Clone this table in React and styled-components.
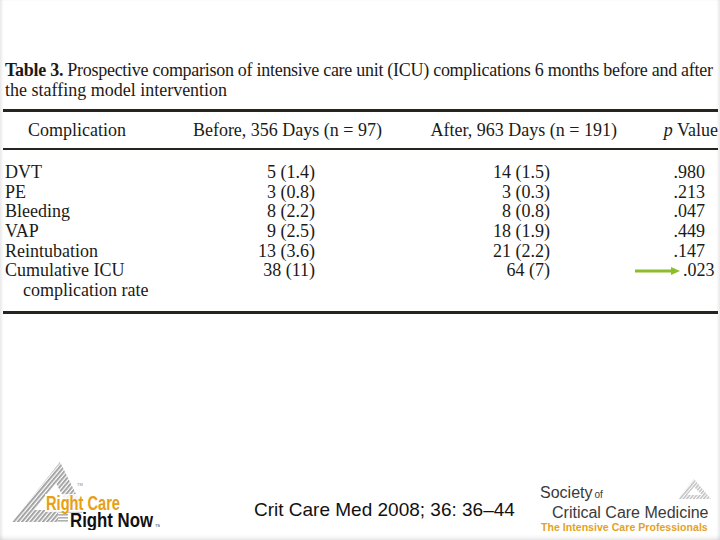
import styled, { createGlobalStyle } from "styled-components";

const GlobalStyle = createGlobalStyle`
  html, body {
    margin: 0;
    padding: 0;
    background: #ffffff;
  }
`;

const rows = [
  { label: "DVT", before: "5 (1.4)", after: "14 (1.5)", p: ".980" },
  { label: "PE", before: "3 (0.8)", after: "3 (0.3)", p: ".213" },
  { label: "Bleeding", before: "8 (2.2)", after: "8 (0.8)", p: ".047" },
  { label: "VAP", before: "9 (2.5)", after: "18 (1.9)", p: ".449" },
  { label: "Reintubation", before: "13 (3.6)", after: "21 (2.2)", p: ".147" },
  { label: "Cumulative ICU", before: "38 (11)", after: "64 (7)", p: ".023", arrow: true },
];

const Slide = styled.div`
  width: 720px;
  height: 540px;
  box-sizing: border-box;
  display: flex;
  flex-direction: column;
  overflow: hidden;
  box-shadow: inset 3px 0 3px -1px rgba(0, 0, 0, 0.08),
    inset -3px 0 3px -1px rgba(0, 0, 0, 0.08),
    inset 0 -4px 4px -2px rgba(0, 0, 0, 0.1);
  font-family: "Liberation Serif", "Times New Roman", serif;
  color: #1c1a18;
`;

const Content = styled.div`
  margin: 60px 2px 0 3px;
`;

const Caption = styled.p`
  margin: 0 0 0 2px;
  font-size: 18px;
  line-height: 20px;
  white-space: nowrap;
  b {
    font-weight: bold;
  }
`;

const CaptionLine = styled.span`
  letter-spacing: ${(p) => p.$ls || 0}px;
`;

const Rule = styled.div`
  height: 0;
  border-top: ${(p) => p.$w}px solid #27231f;
  margin-top: ${(p) => p.$mt || 0}px;
`;

const Row = styled.div`
  display: grid;
  grid-template-columns: 157px 240px 235px 1fr;
  height: ${(p) => p.$h}px;
  align-items: center;
  font-size: 18px;
`;

const Cell = styled.div`
  text-align: ${(p) => p.$align || "left"};
  padding-left: ${(p) => p.$pl || 0}px;
  padding-right: ${(p) => p.$pr || 0}px;
  white-space: nowrap;
`;

const PCell = styled(Cell)`
  display: flex;
  justify-content: flex-end;
  align-items: center;
  gap: 2px;
`;

const Body = styled.div`
  padding: 12px 0 11px;
`;

const Footer = styled.div`
  margin-top: auto;
  height: 80px;
  display: grid;
  grid-template-columns: 244px 284px 1fr;
  align-items: end;
  padding: 0 8px 0 10px;
`;

const LogoBox = styled.div`
  height: 70px;
  margin-bottom: 10px;
  svg {
    display: block;
  }
`;

const Citation = styled.div`
  font-family: "Liberation Sans", Arial, sans-serif;
  font-size: 19px;
  line-height: 22px;
  color: #111;
  margin-bottom: 19px;
  white-space: nowrap;
`;

const SccmLogo = styled.div`
  margin-bottom: 6px;
  font-family: "Liberation Sans", Arial, sans-serif;
  color: #3a3a3a;
`;

const SccmTop = styled.div`
  height: 18px;
  display: flex;
  align-items: flex-end;
  justify-content: space-between;
  font-size: 16px;
  line-height: 18px;
  padding-left: 2px;
  small {
    font-size: 10px;
    margin-left: 2px;
  }
  svg {
    margin-bottom: 4px;
  }
`;

const SccmName = styled.div`
  font-size: 16px;
  line-height: 17px;
  padding-left: 14px;
  white-space: nowrap;
`;

const SccmTag = styled.div`
  font-size: 10.5px;
  line-height: 13px;
  font-weight: bold;
  color: #e3a21e;
  letter-spacing: 0.05px;
  padding-left: 3px;
  white-space: nowrap;
`;

const Arrow = () => (
  <svg width="46" height="10" viewBox="0 0 46 10">
    <line x1="0" y1="5" x2="38" y2="5" stroke="#8dbd2b" strokeWidth="3" />
    <polygon points="36,1 45,5 36,9" fill="#8dbd2b" />
  </svg>
);

const RightCareLogo = () => (
  <svg width="150" height="70" viewBox="0 0 150 70">
    <defs>
      <pattern id="stripes" width="3.2" height="3.2" patternUnits="userSpaceOnUse" patternTransform="rotate(40)">
        <rect width="3.2" height="3.2" fill="#ffffff" />
        <rect width="2" height="3.2" fill="#a4a4a4" />
      </pattern>
      <pattern id="hstripes" width="4" height="3" patternUnits="userSpaceOnUse">
        <rect width="4" height="3" fill="#ffffff" />
        <rect width="4" height="1.6" fill="#b0b0b0" />
      </pattern>
    </defs>
    <polygon points="50,2 2,62 80,62" fill="url(#stripes)" />
    <polygon points="46,23 24,50 60,50" fill="#ffffff" />
    <rect x="48" y="50" width="24" height="12" fill="url(#hstripes)" />
    <text x="67" y="26" fontSize="4" fill="#888" fontFamily="Liberation Sans, sans-serif">TM</text>
    <rect x="35" y="34" width="76" height="18" fill="#ffffff" opacity="0.85" />
    <text
      x="36"
      y="50"
      textLength="74"
      lengthAdjust="spacingAndGlyphs"
      fontSize="21"
      fontWeight="bold"
      fill="#e8a013"
      fontFamily="Liberation Sans Narrow, Liberation Sans, sans-serif"
    >
      Right Care
    </text>
    <rect x="58" y="53" width="88" height="16" fill="#ffffff" />
    <text
      x="60"
      y="67"
      textLength="83"
      lengthAdjust="spacingAndGlyphs"
      fontSize="21"
      fontWeight="bold"
      fill="#111111"
      fontFamily="Liberation Sans Narrow, Liberation Sans, sans-serif"
    >
      Right Now
    </text>
    <text x="145" y="67" fontSize="4" fill="#333" fontFamily="Liberation Sans, sans-serif">TM</text>
  </svg>
);

const SccmMark = () => (
  <svg width="36" height="22" viewBox="0 0 36 22">
    <defs>
      <pattern id="sccmStripes" width="2.6" height="2.6" patternUnits="userSpaceOnUse" patternTransform="rotate(40)">
        <rect width="2.6" height="2.6" fill="#ffffff" />
        <rect width="1.6" height="2.6" fill="#c4c4c4" />
      </pattern>
    </defs>
    <polygon points="18,1 2,21 35,21" fill="url(#sccmStripes)" />
    <polygon points="18,9 11,17 26,17" fill="#ffffff" />
  </svg>
);

export default function App() {
  return (
    <>
      <GlobalStyle />
      <Slide>
        <Content>
          <Caption>
            <CaptionLine $ls={-0.28}>
              <b>Table 3.</b> Prospective comparison of intensive care unit (ICU) complications 6 months before and after
            </CaptionLine>
            <br />
            <CaptionLine>the staffing model intervention</CaptionLine>
          </Caption>
          <Rule $w={3} $mt={9} />
          <Row $h={36}>
            <Cell $pl={25}>Complication</Cell>
            <Cell $align="right" $pr={18}>Before, 356 Days (n = 97)</Cell>
            <Cell $align="right" $pr={18}>After, 963 Days (n = 191)</Cell>
            <Cell $align="right">
              <i>p</i> Value
            </Cell>
          </Row>
          <Rule $w={2} />
          <Body>
            {rows.map((r) => (
              <Row key={r.label} $h={19.7}>
                <Cell $pl={2}>{r.label}</Cell>
                <Cell $align="right" $pr={85}>{r.before}</Cell>
                <Cell $align="right" $pr={85}>{r.after}</Cell>
                <PCell $pr={13}>
                  {r.arrow && <Arrow />}
                  {r.p}
                </PCell>
              </Row>
            ))}
            <Row $h={19.7}>
              <Cell $pl={20}>complication rate</Cell>
            </Row>
          </Body>
          <Rule $w={3} />
        </Content>
        <Footer>
          <LogoBox>
            <RightCareLogo />
          </LogoBox>
          <Citation>Crit Care Med 2008; 36: 36–44</Citation>
          <SccmLogo>
            <SccmTop>
              <span>
                Society<small>of</small>
              </span>
              <SccmMark />
            </SccmTop>
            <SccmName>Critical Care Medicine</SccmName>
            <SccmTag>The Intensive Care Professionals</SccmTag>
          </SccmLogo>
        </Footer>
      </Slide>
    </>
  );
}
